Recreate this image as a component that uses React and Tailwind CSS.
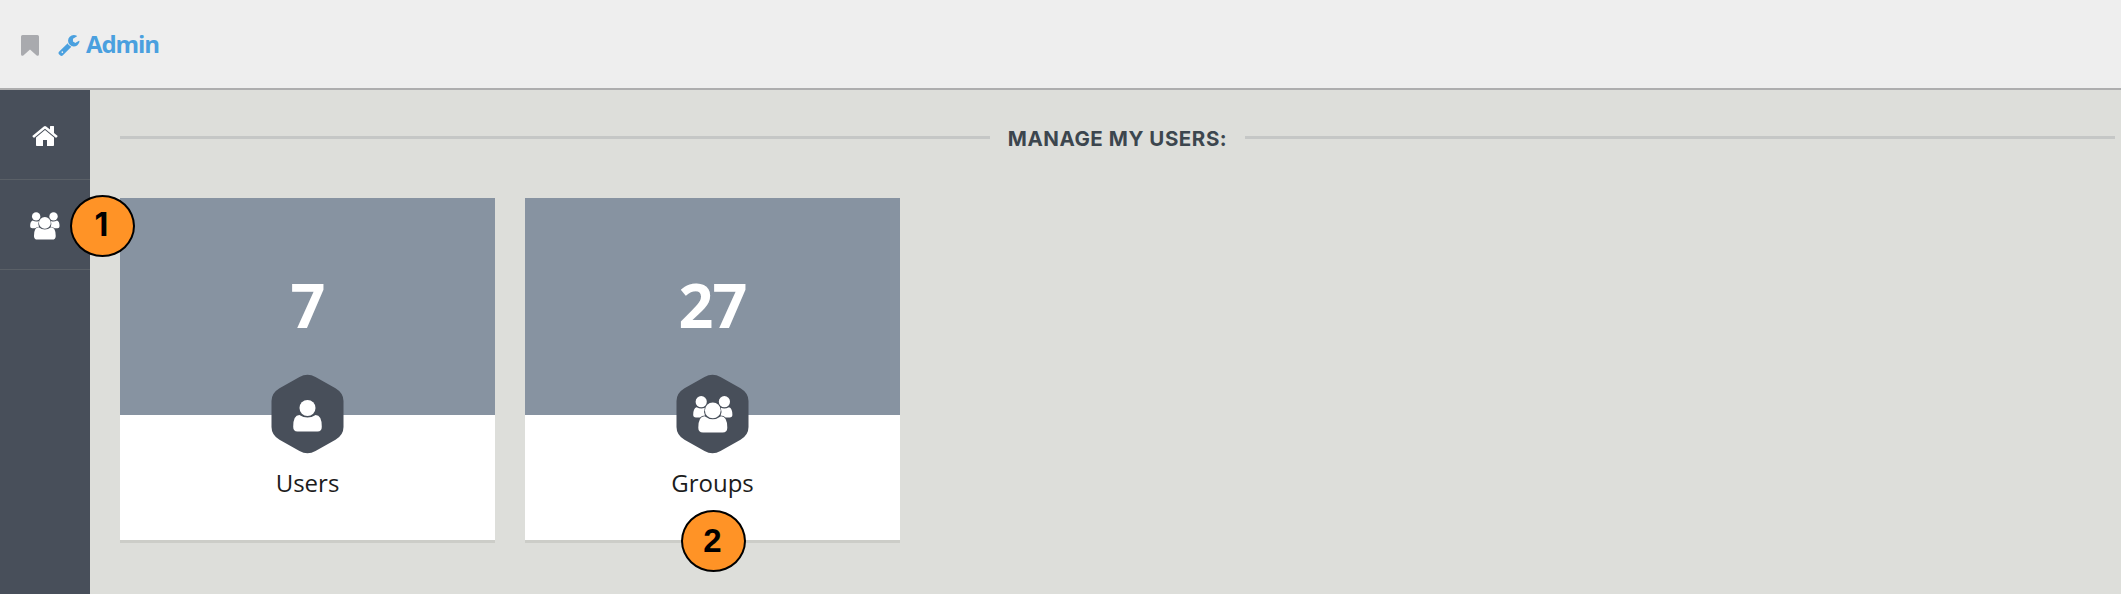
const Home = ({ className }) => (
  <svg viewBox="64 253 1664 1283" preserveAspectRatio="none" fill="currentColor" className={className}>
    <path d="M1472 992v480q0 26-19 45t-45 19h-384v-384h-256v384h-384q-26 0-45-19t-19-45v-480q0-1 .5-3t.5-3l575-474 575 474q1 2 1 6zm223-69l-62 74q-8 9-21 11h-3q-13 0-21-7l-692-577-692 577q-12 8-24 7-13-2-21-11l-62-74q-8-10-7-23.5t11-21.5l719-599q32-26 76-26t76 26l244 204v-195q0-14 9-23t23-9h192q14 0 23 9t9 23v408l219 182q10 8 11 21.5t-7 23.5z" />
  </svg>
);

const Wrench = ({ className }) => (
  <svg viewBox="85 128 1641 1643" fill="currentColor" className={className}>
    <path d="M448 1472q0-26-19-45t-45-19-45 19-19 45 19 45 45 19 45-19 19-45zm644-420l-682 682q-37 37-90 37-52 0-91-37l-106-108q-38-36-38-90 0-53 38-91l681-681q39 98 114.5 173.5t173.5 114.5zm634-435q0 39-23 106-47 134-164.5 217.5t-258.5 83.5q-185 0-316.5-131.5t-131.5-316.5 131.5-316.5 316.5-131.5q58 0 121.5 16.5t107.5 46.5q16 11 16 28t-16 28l-293 169v224l193 107q5-3 79-48.5t135.5-81 70.5-35.5q15 0 23.5 10t8.5 25z" />
  </svg>
);

const Bookmark = ({ className }) => (
  <svg viewBox="0 0 18 21" fill="currentColor" className={className}>
    <path d="M1.6 0H16.4Q18 0 18 1.6V19.2Q18 20.8 16.6 20.8Q16 20.8 15.4 20.2L9 14.4L2.6 20.2Q2 20.8 1.4 20.8Q0 20.8 0 19.2V1.6Q0 0 1.6 0Z" />
  </svg>
);

const Group = ({ className }) => (
  <svg viewBox="0 0 40 37" fill="currentColor" className={className}>
    <circle cx="8.2" cy="5.7" r="5.6" />
    <circle cx="31.4" cy="5.7" r="5.6" />
    <circle cx="19.8" cy="14.4" r="7.9" />
    <path d="M3.6 11.2Q8 13.4 11.8 11.7Q10.3 15.6 12 19.4Q8.8 19.5 7 21.5H3Q.2 21.5.2 18.8Q.2 12.2 3.6 11.2Z" />
    <path d="M36 11.2Q31.6 13.4 27.8 11.7Q29.3 15.6 27.6 19.4Q30.8 19.5 32.6 21.5H36.6Q39.4 21.5 39.4 18.8Q39.4 12.2 36 11.2Z" />
    <path d="M11.6 20.2Q19.8 26.2 28 20.2Q34.3 20.2 34.3 31.8Q34.3 36.6 29.6 36.6H10Q5.3 36.6 5.3 31.8Q5.3 20.2 11.6 20.2Z" />
  </svg>
);

const User = ({ className }) => (
  <svg viewBox="0 0 29 32" fill="currentColor" className={className}>
    <circle cx="14.5" cy="8" r="8" />
    <path d="M6.4 15Q14.5 20.2 22.6 15Q28.8 15 28.8 26.8Q28.8 31.5 24.6 31.5H4.4Q.2 31.5.2 26.8Q.2 15 6.4 15Z" />
  </svg>
);

const Badge = ({ children, className }) => (
  <div className={`absolute z-10 flex h-[62px] w-[65px] items-center justify-center rounded-[50%] border-2 border-black bg-[#ff9326] leading-none font-bold text-black ${className}`}>
    <span className="relative -top-px -left-px">{children}</span>
  </div>
);

const Card = ({ count, label, icon, children }) => (
  <div className="relative flex h-[342px] w-[375px] flex-col bg-white shadow-[0_3px_0_#cccdc8]">
    <div className="flex h-[217px] items-center justify-center bg-[#8793a1] pb-1 text-[61px] leading-none font-bold tracking-[-1px] text-white">
      <span>{count}</span>
    </div>
    <div className="absolute top-[176px] left-[151px] flex h-20 w-[73px] items-center justify-center">
      <svg viewBox="0 0 73 80" className="absolute inset-0 h-20 w-[73px]" fill="#484f5a">
        <path d="M28.5 3Q36.5-1.5 44.5 3L64.5 14.2Q72.5 19 72.5 27V53Q72.5 61 64.5 65.8L44.5 77Q36.5 81.5 28.5 77L8.5 65.8Q.5 61 .5 53V27Q.5 19 8.5 14.2Z" />
      </svg>
      <div className="relative text-white">{icon}</div>
    </div>
    <div className="pt-[50px] text-center text-2xl leading-[36px] text-[#1c1c1c]">{label}</div>
    {children}
  </div>
);

export default function App() {
  return (
    <div className="flex h-[594px] w-[2121px] flex-col overflow-hidden bg-[#dddeda] font-['Open_Sans',sans-serif]">
      <header className="flex h-[90px] shrink-0 items-center border-b-2 border-[#adadae] bg-[#eeeeee] pl-[21px]">
        <Bookmark className="mt-[2px] h-[21px] w-[18px] text-[#a9aaae]" />
        <a className="ml-[19px] flex items-center gap-[6px] text-[#4aa0df]">
          <Wrench className="mt-[2px] h-[21px] w-[22px]" />
          <span className="text-2xl leading-8 font-bold tracking-[-1.1px]">Admin</span>
        </a>
      </header>
      <div className="flex flex-1">
        <nav className="relative w-[90px] shrink-0 bg-[#484f5a] text-white">
          <div className="flex h-[90px] items-center justify-center border-b border-[#5a6067] pt-[3px]">
            <Home className="h-5 w-[26px]" />
          </div>
          <div className="flex h-[90px] items-center justify-center border-b border-[#5a6067] pt-[3px]">
            <Group className="h-7 w-[30px]" />
          </div>
          <Badge className="top-[105px] left-[70px] font-['Inter',sans-serif] text-[32px]">1</Badge>
        </nav>
        <main className="flex-1 pt-[29px] pr-[6px] pl-[30px]">
          <div className="flex h-10 items-center">
            <div className="mb-[3px] h-[3px] flex-1 bg-[#c5c7c6]" />
            <h1 className="w-[255px] text-center font-['Inter',sans-serif] text-[20.5px] leading-10 font-bold tracking-[0.55px] whitespace-nowrap text-[#3c464e]">
              MANAGE MY USERS:
            </h1>
            <div className="mb-[3px] h-[3px] flex-1 bg-[#c5c7c6]" />
          </div>
          <div className="mt-[39px] flex gap-[30px]">
            <Card count="7" label="Users" icon={<User className="mt-1 h-8 w-[29px]" />} />
            <Card count="27" label="Groups" icon={<Group className="h-[37px] w-10" />}>
              <Badge className="top-[312px] left-[156px] font-['Liberation_Sans',sans-serif] text-[33px]">2</Badge>
            </Card>
          </div>
        </main>
      </div>
    </div>
  );
}
